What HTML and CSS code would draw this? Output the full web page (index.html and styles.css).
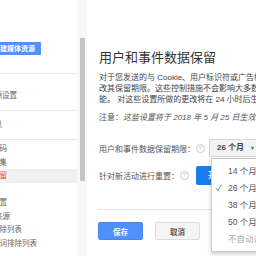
FILE: index.html
```html
<!DOCTYPE html>
<html lang="zh-CN">
<head>
    <meta charset="UTF-8">
    <meta name="viewport" content="width=device-width, initial-scale=1.0">
    <title>数据保留 - 媒体资源设置</title>
    <link rel="stylesheet" href="styles.css">
</head>
<body>
    <div class="page">
        <div class="nav">
            <div class="nav-inner">
                <div class="nav-top"><span class="btn-new">新建媒体资源</span></div>
                <div class="nav-section nav-first">媒体资源设置</div>
                <div class="nav-section">跟踪信息</div>
                <ul class="nav-list">
                    <li>跟踪代码</li>
                    <li>数据收集</li>
                    <li class="active">数据保留</li>
                    <li class="nav-shift">User-ID</li>
                    <li>会话设置</li>
                    <li class="nav-shift">自然搜索来源</li>
                    <li>引荐排除列表</li>
                    <li>搜索字词排除列表</li>
                </ul>
            </div>
        </div>
        <div class="scrollbar"><div class="thumb"></div></div>
        <div class="main">
            <h1>用户和事件数据保留</h1>
            <p class="intro">
                对于您发送的与 Cookie、用户标识符或广告标识符关联的数据，您可以更<br>
                改其保留期限。这些控制措施不会影响大多数报告，这些报告基于汇总数据。<br>
                能。 对这些设置所做的更改将在 24 小时后生效。
            </p>
            <p class="note">注意：<em>这些设置将于 2018 年 5 月 25 日生效。</em></p>
            <div class="field first-field">
                <span class="label">用户和事件数据保留期限：</span>
                <span class="help">?</span>
                <span class="select">26 个月 <span class="caret">▾</span></span>
            </div>
            <div class="field">
                <span class="label">针对新活动进行重置：</span>
                <span class="help">?</span>
                <span class="toggle">开启</span>
            </div>
            <div class="actions">
                <button class="btn-save">保存</button>
                <button class="btn-cancel">取消</button>
            </div>
            <ul class="menu">
                <li>14 个月</li>
                <li class="checked"><span class="tick">✓</span>26 个月</li>
                <li>38 个月</li>
                <li>50 个月</li>
                <li class="muted">不自动过期</li>
            </ul>
        </div>
    </div>
</body>
</html>
```

FILE: styles.css
```css
body {
    margin: 0;
    width: 256px;
    height: 256px;
    overflow: hidden;
    background: #fff;
    font-family: "Liberation Sans", "Noto Sans CJK SC", sans-serif;
    color: #444;
}
.page {
    display: flex;
    height: 256px;
}
.nav {
    flex: none;
    width: 77px;
    overflow: hidden;
    font-size: 7.5px;
    color: #666;
}
.nav-inner {
    margin-left: -29px;
}
.nav-top {
    height: 74px;
    padding-top: 42px;
    box-sizing: border-box;
    border-bottom: 1px solid #e8e8e8;
}
.btn-new {
    display: inline-block;
    margin-left: 16px;
    padding: 0 6px;
    height: 13px;
    line-height: 13px;
    background-color: #4d90fe;
    color: #fff;
    font-size: 7px;
    font-weight: bold;
    border-radius: 1px;
}
.nav-section {
    padding: 8px 0 8px 1px;
    line-height: 12px;
    border-bottom: 1px solid #e8e8e8;
}
.nav-first {
    padding-top: 16px;
}
.nav-list {
    list-style: none;
    margin: 0;
    padding: 2px 0 0;
}
.nav-list li {
    height: 13.5px;
    line-height: 13.5px;
    padding-left: 6px;
    white-space: nowrap;
}
.nav-list .active {
    background-color: #f1f1f1;
    color: #dd4b39;
}
.nav-list .nav-shift {
    margin-left: -12px;
}
.scrollbar {
    flex: none;
    width: 10px;
    padding-top: 38px;
    background-color: #f7f7f7;
}
.thumb {
    width: 5px;
    height: 143px;
    margin-left: 3px;
    background-color: #c4c4c4;
}
.main {
    flex: none;
    width: 300px;
    position: relative;
    padding: 50px 0 0 12px;
    font-size: 8px;
}
h1 {
    margin: 0;
    font-size: 13px;
    line-height: 16px;
    font-weight: normal;
    color: #333;
}
.intro {
    margin: 5.5px 0 0;
    line-height: 11px;
    white-space: nowrap;
    color: #444;
}
.note {
    margin: 7px 0 0;
    line-height: 11px;
    color: #555;
    white-space: nowrap;
}
.field {
    display: flex;
    align-items: center;
    height: 19px;
    margin-top: 9px;
    white-space: nowrap;
}
.first-field {
    margin-top: 16.5px;
    height: 18px;
}
.label {
    color: #555;
}
.help {
    width: 7px;
    height: 7px;
    margin-left: 1px;
    border: 1px solid #ccc;
    border-radius: 50%;
    color: #bbb;
    font-size: 5px;
    line-height: 7px;
    text-align: center;
}
.select {
    margin-left: 4px;
    height: 16px;
    line-height: 16px;
    width: 60px;
    padding-left: 7px;
    background-color: #f3f3f3;
    border: 1px solid #d6d6d6;
    border-radius: 1px;
    font-weight: bold;
    color: #444;
}
.caret {
    margin-left: 5px;
    font-size: 6px;
    color: #777;
}
.toggle {
    margin-left: 7px;
    height: 19px;
    line-height: 19px;
    width: 40px;
    padding-left: 12px;
    background-color: #1a7df0;
    border-radius: 2px;
    color: #fff;
    font-weight: bold;
}
.actions {
    margin-top: 24px;
    padding-top: 12px;
    border-top: 1px solid #e5e5e5;
    margin-left: -1px;
    display: flex;
    gap: 12px;
}
.actions button {
    width: 45px;
    height: 18px;
    border-radius: 2px;
    font-family: inherit;
    font-size: 7.5px;
    font-weight: bold;
    padding: 0;
}
.btn-save {
    background-color: #4d90fe;
    border: 1px solid #4787ed;
    color: #fff;
}
.btn-cancel {
    background-color: #f5f5f5;
    border: 1px solid #dcdcdc;
    color: #555;
}
.menu {
    position: absolute;
    left: 124px;
    top: 158px;
    width: 60px;
    margin: 0;
    padding: 4px 0 3px;
    list-style: none;
    background: #fff;
    border: 1px solid #ccc;
    box-shadow: 0 2px 4px rgba(0, 0, 0, 0.2);
    font-size: 8.5px;
    color: #555;
}
.menu li {
    height: 17px;
    line-height: 17px;
    padding-left: 16px;
    white-space: nowrap;
    position: relative;
}
.menu .tick {
    position: absolute;
    left: 4px;
    color: #666;
}
.menu .muted {
    color: #aaa;
}
```
